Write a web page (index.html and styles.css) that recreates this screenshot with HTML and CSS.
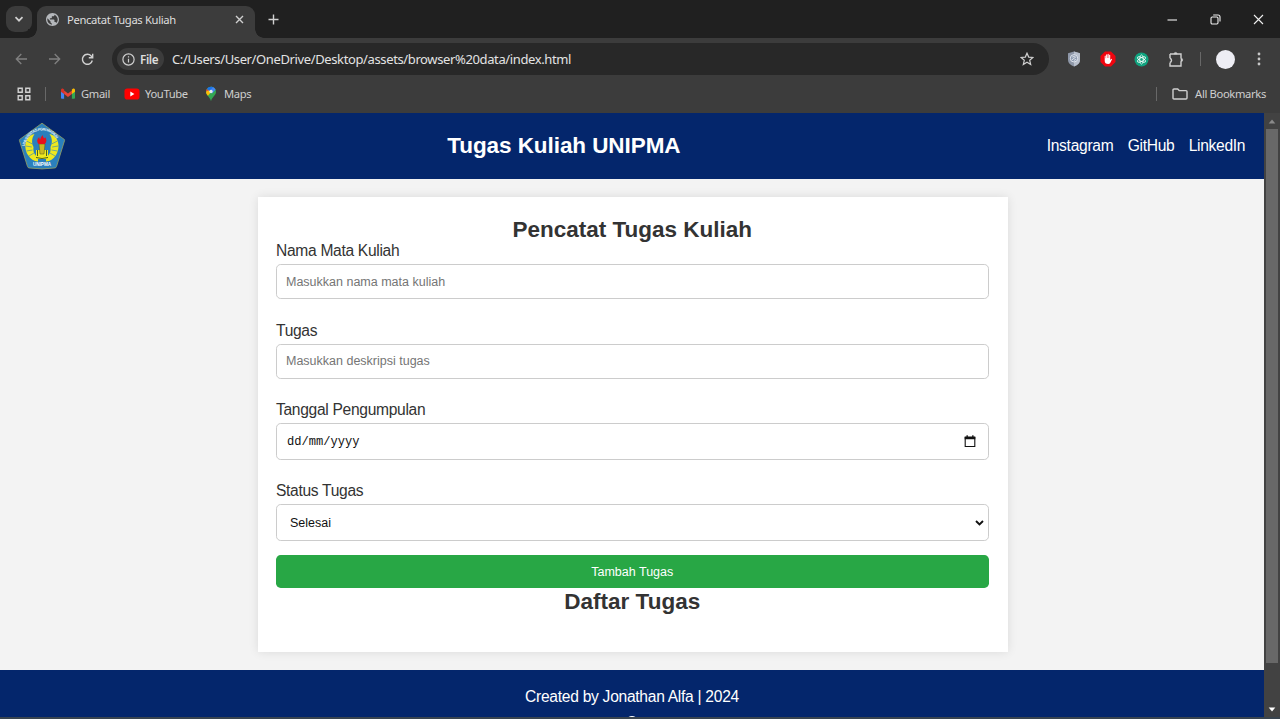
FILE: index.html
```html
<!DOCTYPE html>
<html lang="id">
<head>
<meta charset="utf-8">
<title>Pencatat Tugas Kuliah</title>
<link rel="stylesheet" href="styles.css">
</head>
<body>
<div class="browser">
  <div class="tabstrip">
    <div class="tab-search"><svg width="10" height="10" viewBox="0 0 10 10"><path d="M1.500 3.200 5 6.700l3.500-3.500" class="stroke-light thick"/></svg></div>
    <div class="tab">
      <svg class="globe" width="13" height="13" viewBox="0 0 24 24"><path fill="#b4b7bb" d="M12 0C5.400 0 0 5.400 0 12s5.400 12 12 12 12-5.400 12-12S18.600 0 12 0zm-1.200 21.500C6 21 2.400 17 2.400 12c0-.7.100-1.500.3-2.200L8.400 15.600v1.200c0 1.300 1.100 2.400 2.400 2.400zm8.300-3c-.3-1-1.200-1.700-2.300-1.700h-1.200v-3.600c0-.7-.5-1.200-1.200-1.200H7.200V9.600h2.400c.7 0 1.200-.5 1.200-1.200V6h2.400c1.300 0 2.400-1.100 2.400-2.400v-.5c3.500 1.400 6 4.900 6 8.900 0 2.500-1 4.800-2.500 6.500z"/></svg>
      <span class="tab-title">Pencatat Tugas Kuliah</span>
      <svg class="tab-close" width="9" height="9" viewBox="0 0 9 9"><path d="M1 1l7 7M8 1l-7 7" class="stroke-light"/></svg>
    </div>
    <svg class="new-tab" width="11" height="11" viewBox="0 0 11 11"><path d="M5.500 .5v10M.5 5.500h10" class="stroke-light"/></svg>
    <div class="window-controls">
      <svg width="11" height="11" viewBox="0 0 11 11"><path d="M.5 6h9.500" class="stroke-white"/></svg>
      <svg width="11" height="11" viewBox="0 0 11 11"><rect x="1" y="3" width="7" height="7" rx="1.200" class="stroke-white"/><path d="M3.200 1h4.800a2 2 0 0 1 2 2v4.600" class="stroke-white"/></svg>
      <svg width="11" height="11" viewBox="0 0 11 11"><path d="M1 1l9 9M10 1l-9 9" class="stroke-white"/></svg>
    </div>
  </div>
  <div class="toolbar">
    <div class="nav-icons">
      <svg width="13" height="12" viewBox="0 0 13 12"><path d="M12 6H1.500M6.300 1 1.300 6l5 5" class="stroke-dim"/></svg>
      <svg width="13" height="12" viewBox="0 0 13 12"><path d="M1 6h10.500M6.700 1l5 5-5 5" class="stroke-dim"/></svg>
      <svg width="13" height="13" viewBox="0 0 13 13"><path d="M11.300 7.500A5 5 0 1 1 10.200 3l1.300 1.500M11.700 .8v4H7.800" class="stroke-light"/></svg>
    </div>
    <div class="omnibox">
      <div class="file-chip">
        <svg width="13" height="13" viewBox="0 0 13 13"><circle cx="6.500" cy="6.500" r="5.600" class="stroke-light thin"/><path d="M6.500 5.800v3.700M6.500 3.300v1.300" class="stroke-light thin"/></svg>
        <span>File</span>
      </div>
      <span class="url">C:/Users/User/OneDrive/Desktop/assets/browser%20data/index.html</span>
      <svg class="star" width="14" height="14" viewBox="0 0 14 14"><path d="M7 1.200l1.700 3.900 4.200.4-3.200 2.800 1 4.200L7 10.300l-3.700 2.200 1-4.200L1.100 5.500l4.200-.4z" class="stroke-light thin"/></svg>
    </div>
    <div class="extensions">
      <svg width="14" height="16" viewBox="0 0 14 16"><path d="M7 .5 13 2.300V9q0 4-6 6.500Q1 13 1 9V2.300z" fill="#8e97a8"/><path d="M7 .5 13 2.300V9q0 4-6 6.500z" fill="#b8bfcc"/><circle cx="7" cy="7.300" r="3.700" fill="#8e9bb0" stroke="#dfe4ed"/><path d="M5 8.800l4-3M5.300 6l2.500-.7M7 9.400l2-1" stroke="#e6ebf2" stroke-width=".9"/></svg>
      <svg width="16" height="16" viewBox="0 0 16 16"><path d="M5 .5h6L15.500 5v6L11 15.500H5L.5 11V5z" fill="#f0050f"/><path d="M4.700 8.200V4.900q.5-.7 1 0v2.300h.4V3.700q.6-.8 1.100 0V7h.4V3.200q.6-.7 1.100 0V7h.4V4.100q.6-.7 1.100 0v5l1-1.200q.8-.4.900.3L10.200 12q-.6 1-2 1-3.500 0-3.500-3.200z" fill="#fff"/></svg>
      <svg width="15" height="15" viewBox="0 0 15 15"><circle cx="7.500" cy="7.500" r="7" fill="#10a37f"/><g fill="none" stroke="#fff" stroke-width=".75"><ellipse cx="7.500" cy="7.500" rx="1.800" ry="4.600"/><ellipse cx="7.500" cy="7.500" rx="1.800" ry="4.600" transform="rotate(60 7.500 7.500)"/><ellipse cx="7.500" cy="7.500" rx="1.800" ry="4.600" transform="rotate(120 7.500 7.500)"/></g></svg>
      <svg width="17" height="17" viewBox="0 0 17 17"><path d="M2 3h11v4.500M13 10.200V15H2v-3.300M2 3v4" class="stroke-light"/><path d="M1.800 7.200a2.200 2.200 0 0 1 0 4.300" class="stroke-light"/><path d="M6 3a1.600 1.600 0 0 1 3.200 0zM13 7.200a1.700 1.700 0 0 1 0 3.400z" fill="#d0d0d0" stroke="#d0d0d0" stroke-width=".6"/></svg>
    </div>
    <span class="divider toolbar-divider"></span>
    <span class="avatar"></span>
    <svg class="menu" width="4" height="14" viewBox="0 0 4 14"><g fill="#c7c7c7"><circle cx="2" cy="2" r="1.400"/><circle cx="2" cy="7" r="1.400"/><circle cx="2" cy="12" r="1.400"/></g></svg>
  </div>
  <div class="bookmarks">
    <svg width="14" height="14" viewBox="0 0 14 14"><path d="M1.200 1.200h4v4h-4zM8.800 1.200h4v4h-4zM1.200 8.800h4v4h-4zM8.800 8.800h4v4h-4z" class="stroke-light"/></svg>
    <span class="divider apps-divider"></span>
    <svg class="gmail" width="14" height="11" viewBox="0 0 14 11"><path d="M0 2v8q0 .8.900.8H3.100V4.500z" fill="#4285f4"/><path d="M14 2v8q0 .8-.9.800h-2.200V4.500z" fill="#34a853"/><path d="M3.100 2.500 7 5.400l3.900-2.900v3.600L7 9 3.100 6.100z" fill="#ea4335"/><path d="M0 2Q0 0 1.800.5l1.300 1v4.600L0 3.800z" fill="#d93025"/><path d="M14 2q0-2-1.800-1.500l-1.300 1v4.600L14 3.800z" fill="#fbbc04"/></svg>
    <span class="bm bm-gmail">Gmail</span>
    <svg class="youtube" width="16" height="12" viewBox="0 0 16 12"><rect x=".5" y=".5" width="15" height="11" rx="2.800" fill="#f00"/><path d="M6.300 3.600v4.800L10.400 6z" fill="#fff"/></svg>
    <span class="bm bm-youtube">YouTube</span>
    <svg class="maps" width="12" height="16" viewBox="0 0 12 16"><path d="M6 .7a5 5 0 0 1 5 5c0 4-4.100 5.100-5 9.600-.8-4.500-5-5.600-5-9.600a5 5 0 0 1 5-5z" fill="#34a853"/><path d="M1 5.700C1 7.400 2 8.700 3 9.800l5.500-6.500L6 .7z" fill="#fbbc04"/><path d="M6 .7a5 5 0 0 1 4.600 3L7 7.500 4.200 4.200z" fill="#4285f4"/><path d="M6 .7A5 5 0 0 0 1.800 3l2.700 2.200L8 1.100Q7 .7 6 .7z" fill="#1a73e8"/><path d="M1.800 3Q1 4.200 1 5.600l2.500-1.100z" fill="#ea4335"/><circle cx="6" cy="5.500" r="1.700" fill="#e8eaed"/></svg>
    <span class="bm bm-maps">Maps</span>
    <div class="all-bookmarks">
      <span class="divider"></span>
      <svg width="16" height="12" viewBox="0 0 16 12"><path d="M2 1h3.700l1.500 1.600H14q1 0 1 1V10q0 1-1 1H2q-1 0-1-1V2q0-1 1-1z" class="stroke-light"/></svg>
      <span class="bm bm-all">All Bookmarks</span>
    </div>
  </div>
</div>
<div class="viewport">
  <div class="page">
    <header class="header">
      <svg class="logo" width="48" height="48" viewBox="0 0 48 48">
        <defs><path id="arc" d="M6.500 24.500C9 14 16 8.500 24 8.500s15 5.500 17.500 16"/></defs>
        <path d="M24 1.200 46.400 17.500q.4.300.2.900L38.500 44.500q-.3 1.200-1.500 1.400-13 2-26 0-1.200-.2-1.500-1.400L1.400 18.400q-.2-.6.2-.9z" fill="#2a80bd" stroke="#8b9a65" stroke-width=".9"/>
        <g fill="#eee81f"><path d="M16.500 12C6.500 14 5.500 26 10 33c2.500 4.200 6 6.500 10 6.500V35c-4-2-5-6-4.500-10-2-4-2-8.500 1-13z"/><path d="M31.500 12c10 2 11 14 6.500 21-2.500 4.200-6 6.500-10 6.500V35c4-2 5-6 4.500-10 2-4 2-8.500-1-13z"/><path d="M18 28h12v9H18z"/></g>
        <path d="M8.500 19l6 3M7.800 24l6 1M8.500 29l6-1M11 34l5-3M39.500 19l-6 3M40.200 24l-6 1M39.500 29l-6-1M37 34l-5-3" stroke="#2a80bd" stroke-width=".6"/>
        <path d="M19.500 28v6M28.500 28v6M18 35.500q6 2 12 0" fill="none" stroke="#4e6218" stroke-width="1"/>
        <path d="M21 22h6l-1 10h-4z" fill="#cdbb22" stroke="#51551b" stroke-width=".5"/>
        <path d="M20.500 22q-3-3.500.7-7 0 2 1 2.400.2-2.500 2.800-4.400-.5 2.500 1.400 3.500.8-.5.500-1.700 3 4 0 7.200z" fill="#e8101c"/>
        <text class="logo-ring"><textPath href="#arc" textLength="43">UNIVERSITAS PGRI MADIUN</textPath></text>
        <text x="24" y="44" class="logo-name">UNIPMA</text>
      </svg>
      <h1 class="site-title">Tugas Kuliah UNIPMA</h1>
      <nav class="links"><a>Instagram</a><a>GitHub</a><a>LinkedIn</a></nav>
    </header>
    <main class="card">
      <h2 class="heading">Pencatat Tugas Kuliah</h2>
      <form class="form">
        <label class="label" for="course">Nama Mata Kuliah</label>
        <input class="control text" id="course" placeholder="Masukkan nama mata kuliah">
        <label class="label" for="task">Tugas</label>
        <input class="control text" id="task" placeholder="Masukkan deskripsi tugas">
        <label class="label">Tanggal Pengumpulan</label>
        <div class="control date"><span class="date-text">dd/mm/yyyy</span><svg width="12" height="13" viewBox="0 0 12 13"><path d="M1.200 2.500h9.600v9H1.200z" fill="none" stroke="#111" stroke-width="1.100"/><path d="M.7 1.500h10.600V4.200H.7zM2.500.3h1.300v2H2.500zM8.200.3h1.300v2H8.200z" fill="#111"/></svg></div>
        <label class="label">Status Tugas</label>
        <div class="control select"><span>Selesai</span><svg width="9" height="6" viewBox="0 0 9 6"><path d="M1 1l3.500 3.400L8 1" fill="none" stroke="#111" stroke-width="1.900"/></svg></div>
        <button class="submit" type="button">Tambah Tugas</button>
      </form>
      <h2 class="heading">Daftar Tugas</h2>
    </main>
    <footer class="footer">
      <p class="credit">Created by Jonathan Alfa | 2024</p>
      <svg class="footer-icon" width="14" height="14" viewBox="0 0 14 14"><circle cx="7" cy="7" r="6.300" fill="none" stroke="#fff" stroke-width="1.200"/></svg>
    </footer>
  </div>
  <div class="scrollbar">
    <svg width="8" height="5" viewBox="0 0 8 5"><path d="M4 .5 7.300 4.500H.7z" fill="#8a8a8a"/></svg>
    <div class="thumb"></div>
    <svg class="down" width="8" height="5" viewBox="0 0 8 5"><path d="M4 4.500.7.500h6.600z" fill="#fff"/></svg>
  </div>
</div>
<div class="taskbar-edge"></div>
</body>
</html>
```
FILE: styles.css
```css
* { box-sizing: border-box; margin: 0; padding: 0; }
body { width: 1280px; height: 719px; overflow: hidden; background: #f3f3f3; font-family: "Liberation Sans", Arial, sans-serif; }
svg { display: block; flex: none; }
.stroke-light, .stroke-dim, .stroke-white { fill: none; stroke: #d0d0d0; stroke-width: 1.400; }
.stroke-dim { stroke: #808080; stroke-width: 1.300; }
.stroke-white { stroke: #f0f0f0; stroke-width: 1.100; }
.thick { stroke-width: 1.700; }
.thin { stroke-width: 1.200; }

/* browser window */
.browser { height: 113px; background: #3c3c3c; font-family: "Noto Sans", sans-serif; color: #dedede; white-space: nowrap; }
.tabstrip { height: 38px; background: #202020; display: flex; align-items: center; padding-left: 6px; }
.tab-search { width: 26px; height: 26px; border-radius: 9px; background: #3b3b3b; display: flex; align-items: center; justify-content: center; }
.tab { width: 218px; height: 32px; margin: 6px 0 0 5px; border-radius: 9px 9px 0 0; background: #3c3c3c; display: flex; align-items: center; padding: 0 11px 6px 9px; position: relative; }
.tab::before, .tab::after { content: ""; position: absolute; bottom: 0; width: 9px; height: 9px; }
.tab::before { left: -9px; background: radial-gradient(circle at 0 0, #202020 8.500px, #3c3c3c 9px); }
.tab::after { right: -9px; background: radial-gradient(circle at 100% 0, #202020 8.500px, #3c3c3c 9px); }
.tab-title { font-size: 11.250px; margin-left: 8px; letter-spacing: -.36px; }
.tab-close { margin-left: auto; }
.new-tab { margin-left: 13px; }
.window-controls { margin-left: auto; display: flex; gap: 32px; padding-right: 16px; }
.toolbar { height: 42px; display: flex; align-items: center; padding-left: 15px; }
.nav-icons { display: flex; align-items: center; gap: 20px; width: 97px; }
.omnibox { width: 937px; height: 32px; background: #282828; border-radius: 16px; display: flex; align-items: center; padding: 0 15px 0 5px; }
.file-chip { width: 47px; height: 22px; border-radius: 11px; background: #3c3c3c; display: flex; align-items: center; gap: 5px; padding-left: 5px; font-size: 11.700px; font-weight: 600; letter-spacing: -.4px; }
.url { margin-left: 8px; font-size: 13px; letter-spacing: -.375px; color: #e3e3e3; }
.star { margin-left: auto; }
.extensions { display: flex; align-items: center; gap: 18.500px; margin-left: 18px; }
.divider { width: 1px; height: 14px; background: #686868; flex: none; }
.toolbar-divider { margin-left: 15px; }
.avatar { width: 19px; height: 19px; border-radius: 50%; background: #ededf4; margin-left: 15px; }
.menu { margin-left: 22px; }
.bookmarks { height: 33px; display: flex; align-items: center; padding: 0 14px 6px 17px; font-size: 11.200px; }
.apps-divider { margin-left: 14px; }
.gmail { margin-left: 15px; }
.bm-gmail { margin-left: 6px; width: 30px; }
.youtube { margin-left: 13px; }
.bm-youtube { margin-left: 5px; width: 44px; }
.maps { margin-left: 16px; }
.bm-maps { margin-left: 7px; }
.bm { letter-spacing: -.34px; color: #cfcfcf; }
.all-bookmarks { margin-left: auto; display: flex; align-items: center; }
.all-bookmarks svg { margin: 0 7px 0 15px; }

/* web page */
.viewport { height: 604px; display: flex; overflow: hidden; }
.page { width: 1264px; background: #f3f3f3; display: flex; flex-direction: column; align-items: center; overflow: hidden; }
.header { width: 100%; height: 66px; flex: none; background: #04266c; color: #fff; display: grid; grid-template-columns: 428.500px 1fr auto; align-items: center; padding: 0 18.750px; }
.logo { margin-left: -1px; }
.logo-ring { font: bold 3.800px "Liberation Sans", sans-serif; fill: #e9f2f5; }
.logo-name { font: bold 4.600px "Liberation Sans", sans-serif; fill: #fff; text-anchor: middle; }
.site-title { font-size: 22.500px; line-height: 26px; letter-spacing: -.07px; }
.links { display: flex; gap: 14.300px; font-size: 15.600px; line-height: 18px; letter-spacing: -.3px; padding-bottom: 1px; }
.card { width: 750px; height: 455px; margin: 18px 0 0 1px; flex: none; background: #fff; padding: 19px 19px 18px 18.500px; box-shadow: 0 0 9.400px rgba(0,0,0,.1); color: #333; }
.heading { font-size: 22.500px; line-height: 27px; text-align: center; }
.form { display: flex; flex-direction: column; margin-top: -1px; }
.label { height: 17px; font-size: 15.600px; line-height: 17px; letter-spacing: -.31px; margin-bottom: 5px; }
.control { width: 100%; border: 1px solid #ccc; border-radius: 4.700px; background: #fff; font: 12.500px "Liberation Sans", sans-serif; color: #111; }
.text { height: 35px; padding: 0 9px; margin-bottom: 22.600px; outline: 0; }
.text::placeholder { color: #757575; opacity: 1; }
.date { height: 37px; display: flex; align-items: center; justify-content: space-between; padding: 0 12px 0 10px; margin-bottom: 22.300px; }
.date-text { font-family: "Liberation Mono", monospace; font-size: 12.100px; padding-top: 1px; }
.select { height: 37px; display: flex; align-items: center; justify-content: space-between; padding: 0 4px 0 13px; }
.submit { height: 33px; margin-top: 13.700px; border: 0; border-radius: 4.700px; background: #28a745; color: #fff; font: 12.500px "Liberation Sans", sans-serif; }
.footer { width: 100%; height: 80px; margin-top: 18px; flex: none; background: #04266c; color: #fff; display: flex; flex-direction: column; align-items: center; padding-top: 18px; font-size: 15.600px; line-height: 18px; letter-spacing: -.28px; }
.footer-icon { margin-top: 9.600px; }
.scrollbar { width: 16px; background: #424242; display: flex; flex-direction: column; align-items: center; padding: 6px 0 5px; }
.thumb { width: 12px; height: 534px; margin-top: 5px; background: #686868; }
.down { margin-top: auto; }
.taskbar-edge { height: 2px; background: #39444f; }
```
